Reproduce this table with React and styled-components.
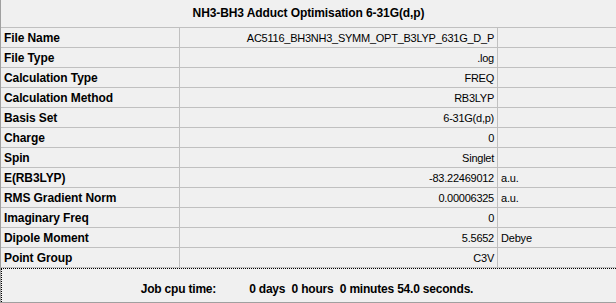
import React from "react"
import styled, { createGlobalStyle } from 'styled-components';

const GlobalStyle = createGlobalStyle`
  html, body {
    margin: 0;
    padding: 0;
    background: #f0f0f0;
  }
  * {
    box-sizing: border-box;
  }
`;

const Window = styled.div`
  width: 616px;
  height: 303px;
  overflow: hidden;
  background: #f0f0f0;
  border-left: 1px solid #a0a0a0;
  border-bottom: 1px solid #a0a0a0;
  display: flex;
  flex-direction: column;
  font-family: 'Liberation Sans', Arial, sans-serif;
  color: #000;
`;

const Title = styled.div`
  height: 28px;
  border-bottom: 1px solid #c0c0c0;
  display: flex;
  align-items: center;
  justify-content: center;
  font-weight: bold;
  font-size: 12px;
  letter-spacing: -0.1px;
  padding-bottom: 1px;
`;

const Row = styled.div`
  display: grid;
  grid-template-columns: 179px 318px 1fr;
  height: 20px;
  border-bottom: 1px solid #c0c0c0;
`;

const Cell = styled.div`
  display: flex;
  align-items: center;
  white-space: nowrap;
  overflow: hidden;
  border-right: ${props => props.last ? 'none' : '1px solid #c0c0c0'};
`;

const Label = styled(Cell)`
  padding-left: 3px;
  font-weight: bold;
  font-size: 12px;
  letter-spacing: -0.1px;
`;

const Value = styled(Cell)`
  justify-content: flex-end;
  padding-right: 3px;
  font-size: 11px;
  letter-spacing: -0.25px;
`;

const Unit = styled(Cell)`
  padding-left: 3px;
  font-size: 11px;
  letter-spacing: -0.2px;
`;

const Footer = styled.div`
  flex: 1;
  margin-right: -4px;
  border-top: 1px dotted #000;
  border-left: 1px dotted #000;
  display: flex;
  justify-content: center;
  align-items: center;
  gap: 33px;
  padding-top: 7px;
  padding-right: 8px;
  font-weight: bold;
  font-size: 12px;
  letter-spacing: -0.2px;
  white-space: pre;
`;

const rows = [
  ['File Name', 'AC5116_BH3NH3_SYMM_OPT_B3LYP_631G_D_P', ''],
  ['File Type', '.log', ''],
  ['Calculation Type', 'FREQ', ''],
  ['Calculation Method', 'RB3LYP', ''],
  ['Basis Set', '6-31G(d,p)', ''],
  ['Charge', '0', ''],
  ['Spin', 'Singlet', ''],
  ['E(RB3LYP)', '-83.22469012', 'a.u.'],
  ['RMS Gradient Norm', '0.00006325', 'a.u.'],
  ['Imaginary Freq', '0', ''],
  ['Dipole Moment', '5.5652', 'Debye'],
  ['Point Group', 'C3V', ''],
];

export default () => (
  <>
    <GlobalStyle />
    <Window>
      <Title>NH3-BH3 Adduct Optimisation 6-31G(d,p)</Title>
      {rows.map(([label, value, unit]) => (
        <Row key={label}>
          <Label>{label}</Label>
          <Value>{value}</Value>
          <Unit last>{unit}</Unit>
        </Row>
      ))}
      <Footer>
        <span>Job cpu time:</span>
        <span>0 days  0 hours  0 minutes 54.0 seconds.</span>
      </Footer>
    </Window>
  </>
);
